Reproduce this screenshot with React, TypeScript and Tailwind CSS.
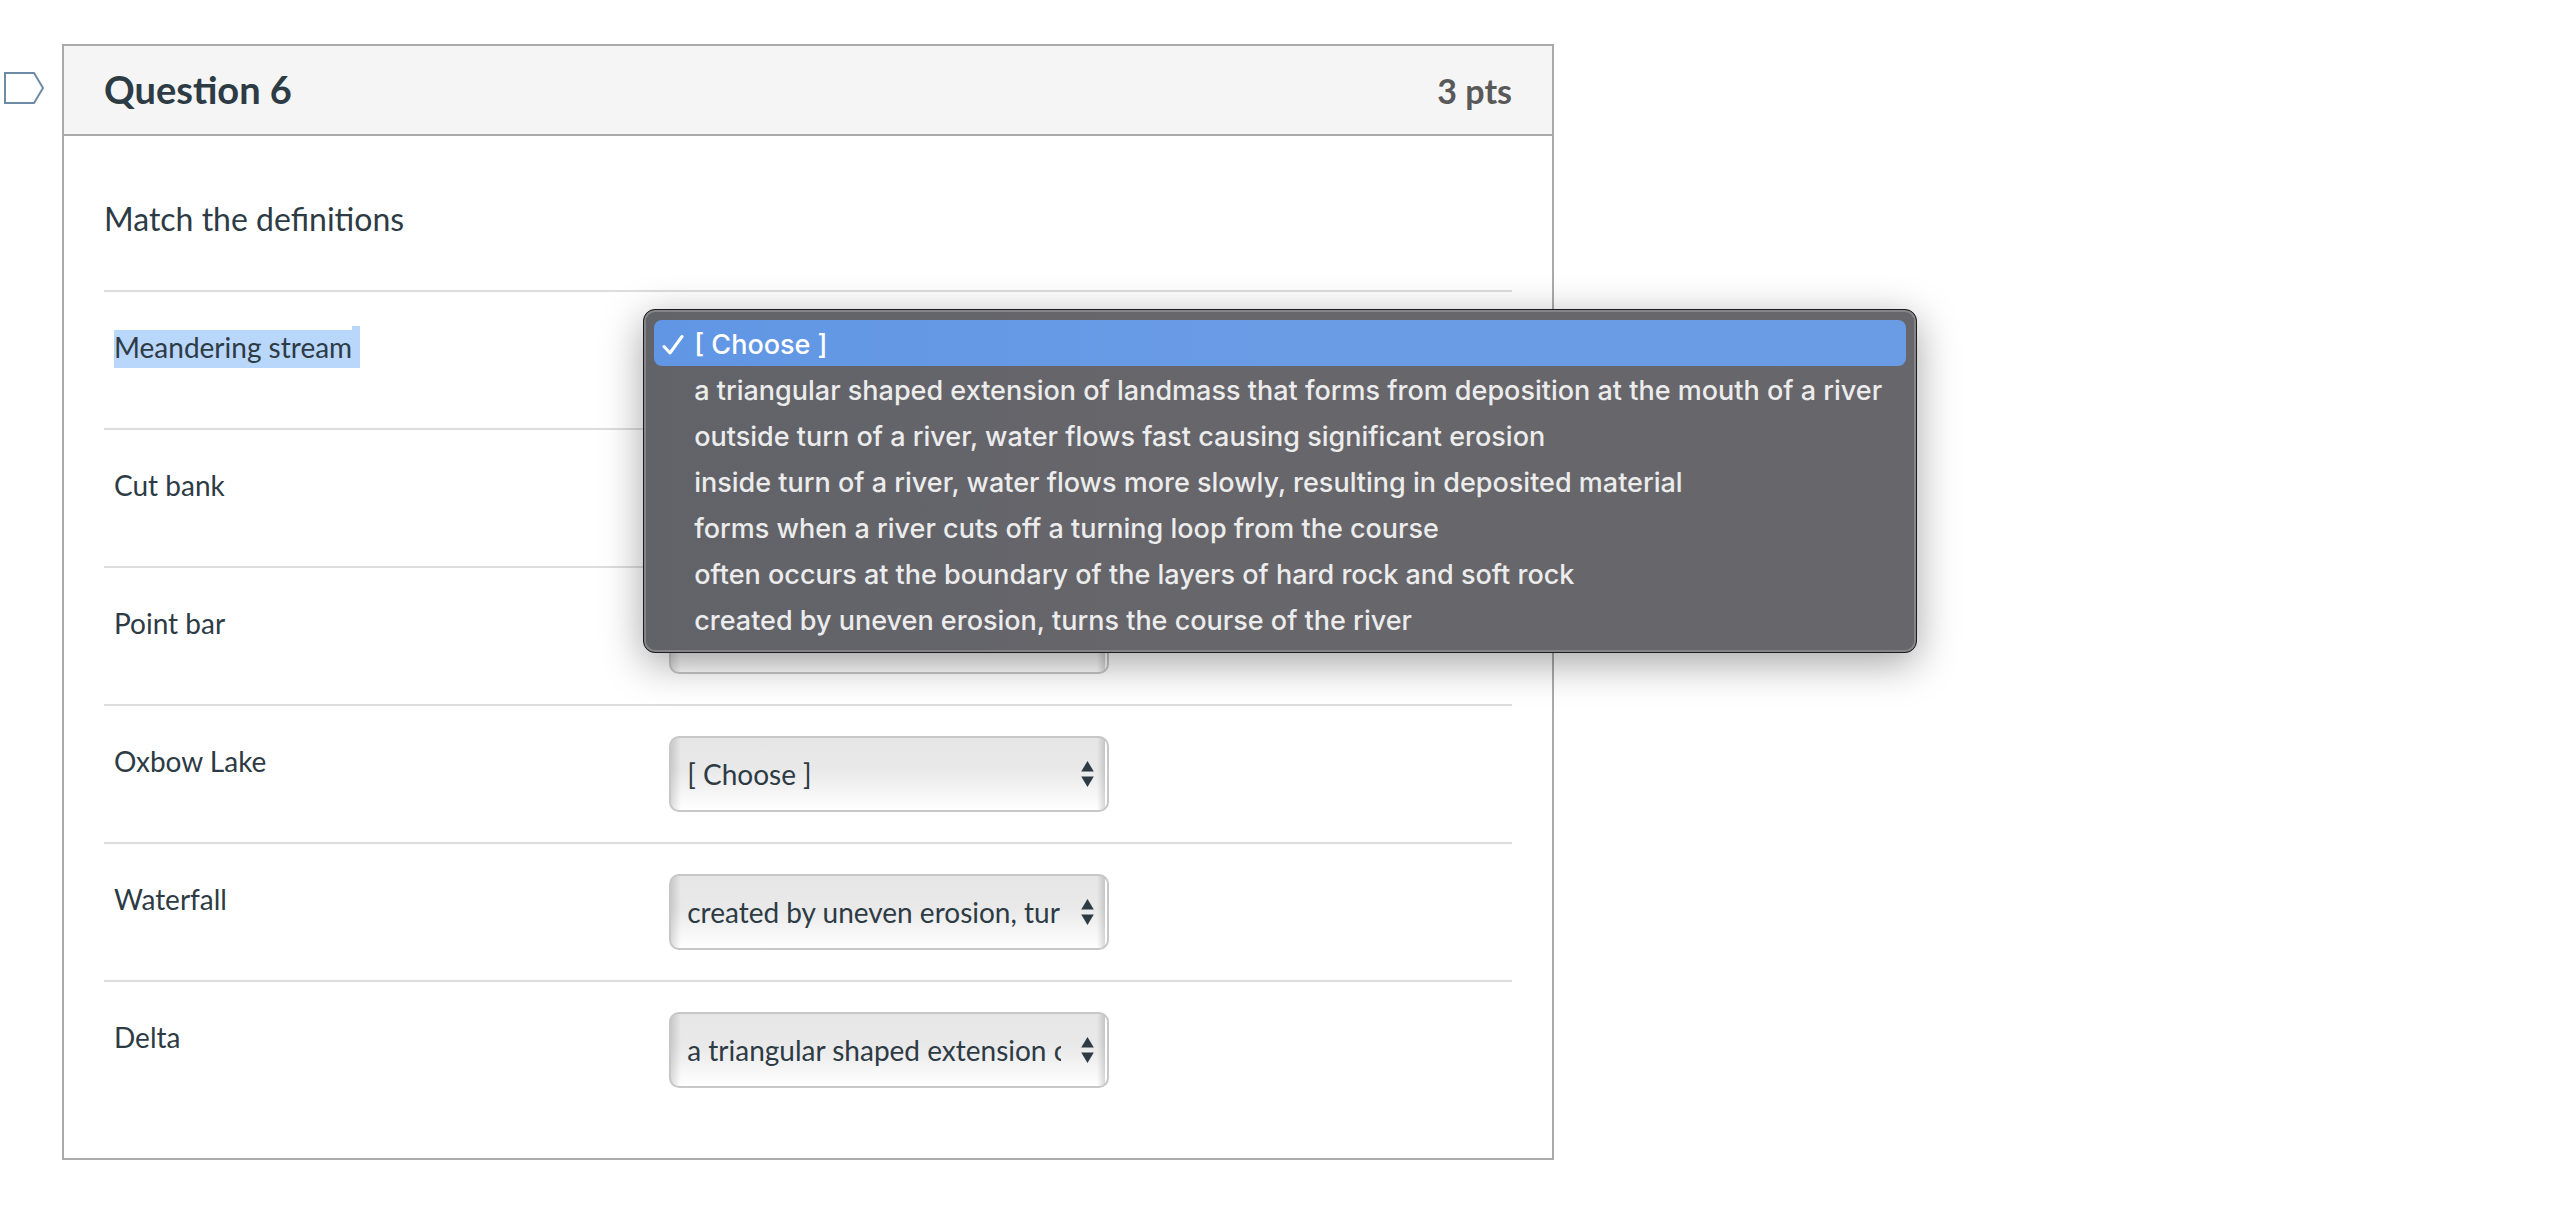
import { useState } from 'react';

const CHOOSE = '[ Choose ]';

const definitions = [
  'a triangular shaped extension of landmass that forms from deposition at the mouth of a river',
  'outside turn of a river, water flows fast causing significant erosion',
  'inside turn of a river, water flows more slowly, resulting in deposited material',
  'forms when a river cuts off a turning loop from the course',
  'often occurs at the boundary of the layers of hard rock and soft rock',
  'created by uneven erosion, turns the course of the river',
];

const options = [CHOOSE, ...definitions];

const terms = [
  { id: 'meandering-stream', label: 'Meandering stream', selected: true, open: true },
  { id: 'cut-bank', label: 'Cut bank' },
  { id: 'point-bar', label: 'Point bar' },
  { id: 'oxbow-lake', label: 'Oxbow Lake' },
  { id: 'waterfall', label: 'Waterfall' },
  { id: 'delta', label: 'Delta' },
];

function FlagButton() {
  return (
    <button type="button" aria-label="Flag question" className="block">
      <svg width="40" height="32" viewBox="0 0 40 32" fill="none" stroke="#6d8ba6" strokeWidth="2">
        <path d="M1 1H30L39 16L30 31H1Z" fill="#fff" />
      </svg>
    </button>
  );
}

function SortArrows() {
  return (
    <svg
      className="pointer-events-none absolute right-[15px] top-[25px]"
      width="13"
      height="26"
      viewBox="0 0 13 26"
      fill="#2d3b45"
    >
      <path d="M6.5 0L12.8 10.5H0.2Z" />
      <path d="M6.5 26L12.8 15.5H0.2Z" />
    </svg>
  );
}

function OptionMenu({ value, onPick }: { value: string; onPick: (value: string) => void }) {
  return (
    <div
      role="listbox"
      aria-label="Definitions"
      className="absolute -left-[26px] -top-[13px] z-10 w-[1274px] rounded-xl border border-[#1c1c1e] bg-[#67666b] bg-linear-to-r from-[#616369] to-[#67666b] to-50% shadow-[inset_0_0_0_2px_#858588,0_10px_40px_rgba(0,0,0,0.36)] p-[10px] font-[Inter,sans-serif] text-[27px] leading-[42px] font-medium text-[#ececec]"
    >
      {options.map((option) => (
        <button
          key={option}
          type="button"
          role="option"
          aria-selected={option === value}
          onClick={() => onPick(option)}
          className="flex w-full items-center rounded-lg pt-1 pl-2 text-left whitespace-nowrap aria-selected:bg-[#6a9ce6] aria-selected:bg-linear-to-r aria-selected:from-[#6096e4] aria-selected:to-[#6a9ce6] aria-selected:to-50% aria-selected:text-white"
        >
          <span className="w-8 shrink-0">
            {option === value && (
              <svg width="22" height="22" viewBox="0 0 22 22" fill="none" stroke="#fff" strokeWidth="3" strokeLinecap="round" strokeLinejoin="round">
                <path d="M2 12.5L8 19L20 2.5" />
              </svg>
            )}
          </span>
          {option}
        </button>
      ))}
    </div>
  );
}

export default function App() {
  const [answers, setAnswers] = useState<Record<string, string>>({
    waterfall: definitions[5],
    delta: definitions[0],
  });

  const setAnswer = (id: string, value: string) => {
    setAnswers((prev) => ({ ...prev, [id]: value }));
  };

  return (
    <div className="flex items-start bg-white pt-11 pb-14 font-[Lato,sans-serif] text-[#2d3b45]">
      <div className="w-[62px] shrink-0 pl-1 pt-7">
        <FlagButton />
      </div>

      <div className="max-w-[1492px] flex-1 border-2 border-[#aaa]">
        <div className="flex h-[90px] items-center justify-between border-b-2 border-[#aaa] bg-[#f5f5f5] px-10">
          <h2 className="pb-0.5 text-[38px] font-bold">Question 6</h2>
          <span className="text-[34px] font-bold text-[#595959]">3 pts</span>
        </div>

        <div className="px-10 pt-[58px] pb-10">
          <p className="mb-[46px] text-[32px] leading-[50px]">Match the definitions</p>

          {terms.map((term) => (
            <div key={term.id} className="flex border-t-2 border-[#ddd] px-[10px] py-[30px]">
              <label htmlFor={term.id} className="w-2/5 shrink-0 text-[28px] leading-[34px]">
                {term.selected ? (
                  <span className="flex items-end pt-1">
                    <span className="bg-[#b9d6fb] pb-1">{term.label}</span>
                    <span className="h-[42px] w-2 bg-[#b9d6fb]" />
                  </span>
                ) : (
                  <span className="block pt-2">{term.label}</span>
                )}
              </label>

              <div className="relative w-[440px]">
                <select
                  id={term.id}
                  value={answers[term.id] ?? CHOOSE}
                  onChange={(e) => setAnswer(term.id, e.target.value)}
                  className="block h-[76px] w-full appearance-none rounded-[10px] border-2 border-[#c7c7c7] bg-[linear-gradient(to_right,rgba(0,0,0,0.13),transparent_10px),linear-gradient(to_left,#fff_2px,rgba(0,0,0,0.15)_2px,transparent_10px),linear-gradient(to_bottom,#e6e6e6,#e9e9e9_45%,#fff)] pl-4 pr-[46px] text-[28px]"
                >
                  {options.map((option) => (
                    <option key={option}>{option}</option>
                  ))}
                </select>
                <SortArrows />
                {term.open && (
                  <OptionMenu
                    value={answers[term.id] ?? CHOOSE}
                    onPick={(value) => setAnswer(term.id, value)}
                  />
                )}
              </div>
            </div>
          ))}
        </div>
      </div>
    </div>
  );
}
